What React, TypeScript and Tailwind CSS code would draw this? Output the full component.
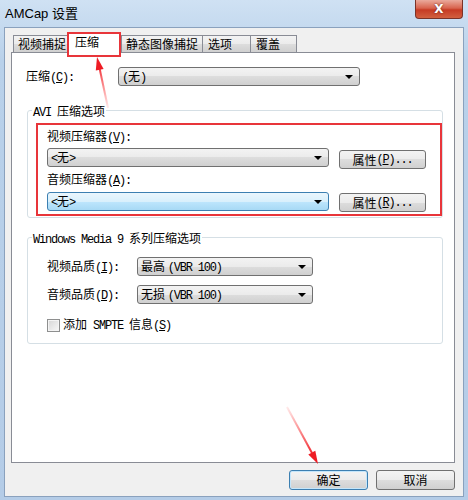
import type { ReactNode } from 'react';

const gray = 'bg-[linear-gradient(#f3f3f3,#ebebeb_50%,#dddddd_50%,#d0d0d0)]';

function H({ children }: { children: ReactNode }) {
  return <span className="font-['Liberation_Mono',monospace] text-[12px] tracking-[-1.2px]">{children}</span>;
}

function Caret() {
  return <span className="w-0 h-0 border-x-[4px] border-x-transparent border-t-[4px] border-t-black" />;
}

function Combo({ className, children, active }: { className: string; children: ReactNode; active?: boolean }) {
  return (
    <div
      className={`h-[19px] flex items-center justify-between rounded-[3px] border pl-[3px] pr-[6px] ${
        active
          ? 'border-[#3c7fb1] bg-[linear-gradient(#eaf6fd,#d9f0fc_50%,#bee6fd_50%,#a7d9f5)]'
          : `border-[#707070] ${gray}`
      } ${className}`}
    >
      <span>{children}</span>
      <Caret />
    </div>
  );
}

function Btn({ className, children }: { className: string; children: ReactNode }) {
  return (
    <div className={`flex items-center justify-center rounded-[3px] border ${gray} ${className}`}>
      {children}
    </div>
  );
}

function Tab({ className, children }: { className: string; children: ReactNode }) {
  return (
    <div className={`h-[17px] flex items-center border-t border-l border-[#898c95] ${gray} ${className}`}>
      {children}
    </div>
  );
}

function Group({ className, title, children }: { className: string; title: ReactNode; children: ReactNode }) {
  return (
    <div className={`ml-[15px] w-[416px] border border-[#d5dfe5] rounded-[3px] ${className}`}>
      <div className="-mt-[7px] ml-[4px] px-[1px] bg-white w-fit leading-[14px]">{title}</div>
      {children}
    </div>
  );
}

export default function App() {
  return (
    <div className="relative w-[468px] h-[500px] overflow-hidden flex flex-col bg-[linear-gradient(#cfe1f3,#b9d1ea_60px,#b4cce7)] font-['Noto_Sans_CJK_SC',sans-serif] text-[12px] leading-[14px] text-black">
      {/* title bar */}
      <div className="h-[27px] flex items-start justify-between">
        <span className="pl-[5px] pt-[6px] font-['Liberation_Sans','Noto_Sans_CJK_SC',sans-serif] text-[13px] leading-[16px]">
          AMCap 设置
        </span>
        <div className="mr-[5px] w-[48px] h-[19px] rounded-b-[4px] border border-t-0 border-[#7a3328] bg-[linear-gradient(#eaaa9c,#d8644e_45%,#c63b24_55%,#d2603f)] flex items-center justify-center text-white font-['DejaVu_Sans',sans-serif] font-bold text-[12px] [text-shadow:0_0_2px_#5a1a10]">
          X
        </div>
      </div>

      {/* client area */}
      <div className="mx-[4px] mb-[3px] flex-1 border border-[#8aa1bd] bg-[#f0f0f0] pl-[6px] pr-[8px] pt-[4px] flex flex-col">
        <div className="h-[20px] flex items-end pl-[2px]">
          <Tab className="w-[55px] pl-[4px]">视频捕捉</Tab>
          <div className="relative z-10 -mb-px h-[21px] w-[53px] pl-[6px] pb-[2px] flex items-center border border-b-0 border-[#898c95] bg-white">
            压缩
          </div>
          <Tab className="w-[81px] pl-[4px]">静态图像捕捉</Tab>
          <Tab className="w-[48px] pl-[5px]">选项</Tab>
          <Tab className="w-[47px] pl-[5px] border-r">覆盖</Tab>
        </div>

        <div className="h-[411px] border border-[#898c95] bg-white">
          <div className="mt-[14px] pl-[14px] flex items-center">
            <span className="w-[92px]">
              压缩<H>(<u>C</u>):</H>
            </span>
            <Combo className="w-[242px]">
              <H>(</H>无<H>)</H>
            </Combo>
          </div>

          <Group className="mt-[24px] h-[108px]" title={<><H>AVI </H>压缩选项</>}>
            <div className="mt-[3px] ml-[8px] h-[93px] border-2 border-[#e8353a] pl-[9px] pt-[4px]">
              <div>
                视频压缩器<H>(<u>V</u>):</H>
              </div>
              <div className="mt-[3px] flex items-start">
                <Combo className="w-[282px]">
                  <H>&lt;</H>无<H>&gt;</H>
                </Combo>
                <Btn className="ml-[10px] mt-[2px] w-[87px] h-[19px] border-[#707070]">
                  属性<H>(<u>P</u>)...</H>
                </Btn>
              </div>
              <div className="mt-[3px]">
                音频压缩器<H>(<u>A</u>):</H>
              </div>
              <div className="mt-[4px] flex items-start">
                <Combo className="w-[282px]" active>
                  <H>&lt;</H>无<H>&gt;</H>
                </Combo>
                <Btn className="ml-[10px] mt-[1px] w-[87px] h-[19px] border-[#707070]">
                  属性<H>(<u>R</u>)...</H>
                </Btn>
              </div>
            </div>
          </Group>

          <Group className="mt-[19px] h-[107px]" title={<><H>Windows Media 9 </H>系列压缩选项</>}>
            <div className="mt-[10px] pl-[19px] flex items-center">
              <span className="w-[90px]">
                视频品质<H>(<u>I</u>):</H>
              </span>
              <Combo className="w-[176px]">
                最高 <H>(VBR 100)</H>
              </Combo>
            </div>
            <div className="mt-[9px] pl-[19px] flex items-center">
              <span className="w-[90px]">
                音频品质<H>(<u>D</u>):</H>
              </span>
              <Combo className="w-[176px]">
                无损 <H>(VBR 100)</H>
              </Combo>
            </div>
            <div className="mt-[13px] pl-[19px] flex items-center">
              <span className="w-[13px] h-[13px] border border-[#8e8f8f] bg-[linear-gradient(135deg,#d6d6d6,#f8f8f8)] shadow-[inset_0_0_0_1px_#f4f4f4]" />
              <span className="ml-[3px]">
                添加<H> SMPTE </H>信息<H>(<u>S</u>)</H>
              </span>
            </div>
          </Group>
        </div>

        <div className="mt-[7px] flex justify-end gap-[8px]">
          <Btn className="w-[79px] h-[20px] border-[#3c7fb1] shadow-[inset_0_0_0_1px_#c4e6fb]">确定</Btn>
          <Btn className="w-[79px] h-[20px] border-[#707070]">取消</Btn>
        </div>
      </div>

      {/* annotations */}
      <div className="absolute left-[67px] top-[32px] w-[54px] h-[25px] border-2 border-[#e8353a] z-20" />
      <svg className="absolute inset-0 z-20 pointer-events-none" width="468" height="500">
        <defs>
          <linearGradient id="a1" x1="108" y1="108" x2="98" y2="62" gradientUnits="userSpaceOnUse">
            <stop offset="0" stopColor="#ff3030" stopOpacity="0.1" />
            <stop offset="1" stopColor="#ee1c24" />
          </linearGradient>
          <linearGradient id="a2" x1="287" y1="407" x2="314" y2="457" gradientUnits="userSpaceOnUse">
            <stop offset="0" stopColor="#ff3030" stopOpacity="0.1" />
            <stop offset="1" stopColor="#ee1c24" />
          </linearGradient>
        </defs>
        <line x1="108" y1="108" x2="99.5" y2="68" stroke="url(#a1)" strokeWidth="2" />
        <polygon points="97,57 103.6,69 95.8,70.5" fill="#ee1c24" />
        <line x1="287" y1="407" x2="312" y2="453" stroke="url(#a2)" strokeWidth="2" />
        <polygon points="318,464 315.3,450.7 308.3,454.5" fill="#ee1c24" />
      </svg>
    </div>
  );
}
